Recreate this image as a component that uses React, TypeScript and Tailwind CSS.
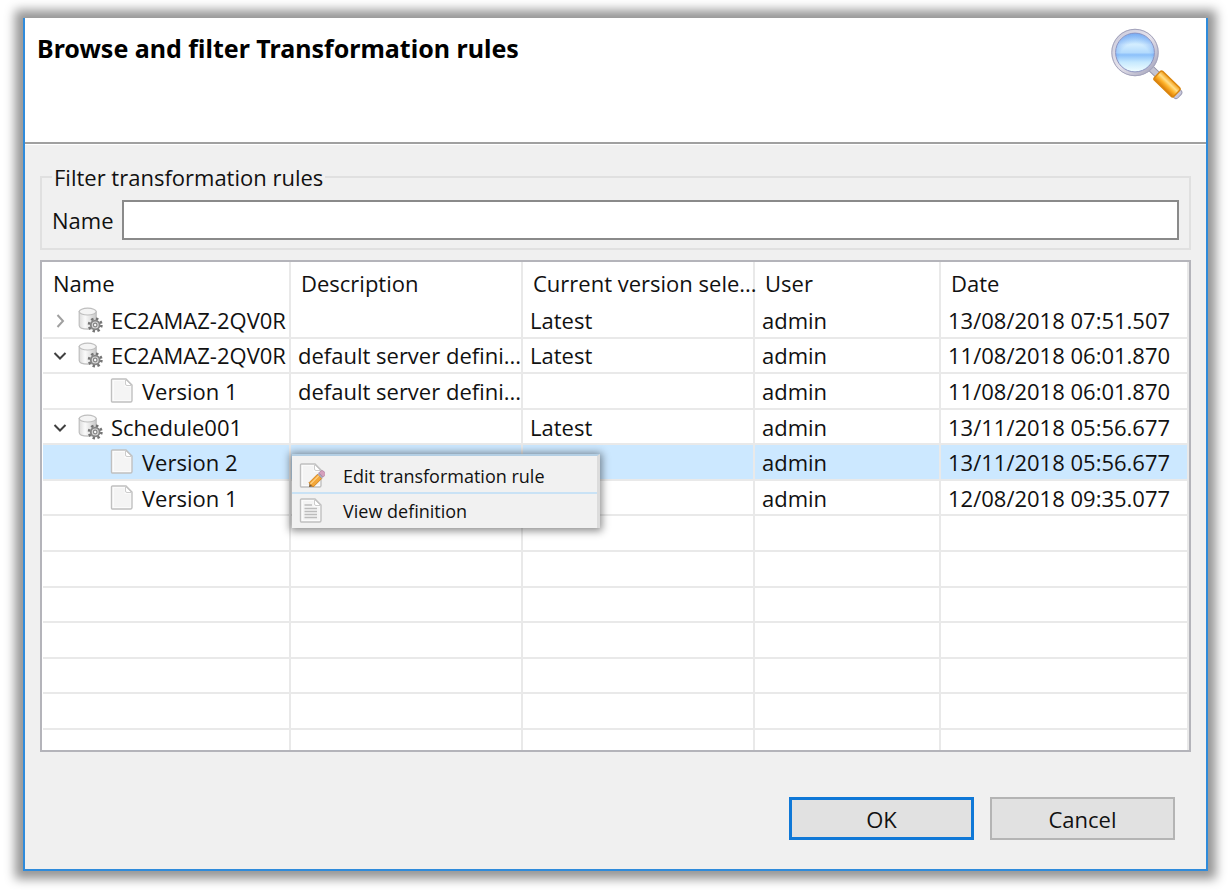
import React from "react";

type Row = {
  kind: "server" | "version";
  name: string;
  open?: boolean;
  description?: string;
  current?: string;
  user: string;
  date: string;
  selected?: boolean;
};

const rows: Row[] = [
  { kind: "server", name: "EC2AMAZ-2QV0R", current: "Latest", user: "admin", date: "13/08/2018 07:51.507" },
  { kind: "server", name: "EC2AMAZ-2QV0R", open: true, description: "default server defini...", current: "Latest", user: "admin", date: "11/08/2018 06:01.870" },
  { kind: "version", name: "Version 1", description: "default server defini...", user: "admin", date: "11/08/2018 06:01.870" },
  { kind: "server", name: "Schedule001", open: true, current: "Latest", user: "admin", date: "13/11/2018 05:56.677" },
  { kind: "version", name: "Version 2", user: "admin", date: "13/11/2018 05:56.677", selected: true },
  { kind: "version", name: "Version 1", user: "admin", date: "12/08/2018 09:35.077" },
];

const emptyRows = [0, 1, 2, 3, 4, 5];

function Magnifier() {
  return (
    <svg viewBox="0 0 74 74" className="size-[74px] shrink-0" aria-hidden="true">
      <defs>
        <linearGradient id="glass" x1="0" y1="0" x2="0" y2="1">
          <stop offset="0" stopColor="#9fd0fa" />
          <stop offset="0.3" stopColor="#d3edff" />
          <stop offset="0.5" stopColor="#b4dbfd" />
          <stop offset="0.56" stopColor="#8cc0fa" />
          <stop offset="0.75" stopColor="#c6e9fe" />
          <stop offset="1" stopColor="#f2feff" />
        </linearGradient>
        <radialGradient id="glassEdge" cx="0.5" cy="0.66" r="0.66">
          <stop offset="0.6" stopColor="#4f8df2" stopOpacity="0" />
          <stop offset="1" stopColor="#4f86ea" stopOpacity="0.5" />
        </radialGradient>
        <linearGradient id="rim" x1="0" y1="0" x2="1" y2="1">
          <stop offset="0" stopColor="#c9c9da" />
          <stop offset="0.5" stopColor="#e6e3ec" />
          <stop offset="1" stopColor="#9f9fb8" />
        </linearGradient>
        <linearGradient id="grip" x1="0" y1="0" x2="0" y2="1">
          <stop offset="0" stopColor="#f29a12" />
          <stop offset="0.35" stopColor="#ffdf8a" />
          <stop offset="0.6" stopColor="#ffb62e" />
          <stop offset="1" stopColor="#d97904" />
        </linearGradient>
      </defs>
      <g transform="translate(25 27) rotate(44)">
        <rect x="22" y="-3" width="10" height="6" fill="#c4c4d2" stroke="#9494a8" />
        <rect x="55" y="-5" width="7" height="10" rx="3" fill="#c8c8dc" stroke="#9c9cb4" />
        <rect x="31" y="-6" width="27" height="12" rx="2" fill="url(#grip)" stroke="#d9860f" strokeWidth="1.4" />
      </g>
      <circle cx="25" cy="26.5" r="21.4" fill="none" stroke="url(#rim)" strokeWidth="4.6" />
      <circle cx="25" cy="26.5" r="23.2" fill="none" stroke="#a4a4bc" strokeWidth="1" />
      <circle cx="25" cy="26.5" r="19.4" fill="url(#glass)" stroke="#8b92c0" strokeWidth="1" />
      <circle cx="25" cy="26.5" r="19" fill="url(#glassEdge)" />
    </svg>
  );
}

function DatabaseGear() {
  return (
    <svg viewBox="0 0 26 26" className="size-[26px] shrink-0" aria-hidden="true">
      <defs>
        <linearGradient id="drum" x1="0" y1="0" x2="1" y2="0">
          <stop offset="0" stopColor="#dcdcdc" />
          <stop offset="0.35" stopColor="#fafafa" />
          <stop offset="1" stopColor="#c9c9c9" />
        </linearGradient>
      </defs>
      <path d="M2.200 4.500v14c0 2.200 4 3.600 9 3.600s8-1.400 8-3.600v-14z" fill="url(#drum)" stroke="#bebebe" strokeWidth="1.2" />
      <ellipse cx="10.7" cy="4.6" rx="8.5" ry="3.4" fill="#f4f4f4" stroke="#bebebe" strokeWidth="1.2" />
      <circle cx="18.2" cy="18" r="6.2" fill="none" stroke="#747474" strokeWidth="2.6" strokeDasharray="2.4 2.47" />
      <circle cx="18.2" cy="18" r="4.4" fill="#d8d8d8" stroke="#858585" strokeWidth="1.8" />
      <circle cx="18.2" cy="18" r="1.8" fill="#fafafa" stroke="#858585" strokeWidth="1.2" />
    </svg>
  );
}

function PageIcon({ lines = false, pencil = false }: { lines?: boolean; pencil?: boolean }) {
  return (
    <svg viewBox="0 0 26 26" className="size-[26px] shrink-0" aria-hidden="true">
      <path d="M2.500 1h13.500l6 6v15.500a1.500 1.500 0 0 1-1.500 1.500h-18a1 1 0 0 1-1-1v-21a1 1 0 0 1 1-1z" fill="#fbfbfb" stroke="#c0c0c0" strokeWidth="1.4" />
      <path d="M4 3h10.500v6h6v13h-16.500z" fill="#f4f4f4" />
      <path d="M15.500 1.500v4.500a1.500 1.500 0 0 0 1.500 1.500h4.500z" fill="#fff" stroke="#cccccc" />
      {lines && <path d="M5.500 7h7.500M5.500 10.500h12.500M5.500 13.500h12.500M5.500 16.500h12.500M5.500 19.500h12.500" stroke="#bcbcbc" strokeWidth="1.3" />}
      {pencil && (
        <g transform="translate(10 24) rotate(-45)">
          <path d="M0 0l4-3v6z" fill="#7a5a34" />
          <path d="M3 -3h12v6h-12z" fill="#f3a73a" stroke="#cf7d17" strokeWidth="0.8" />
          <path d="M3 -1h12" stroke="#ffd48a" strokeWidth="1.2" />
          <path d="M15 -3h2v6h-2z" fill="#a9a9bd" />
          <path d="M17 -3h2.500a2 2 0 0 1 2 2v2a2 2 0 0 1-2 2h-2.500z" fill="#d5a0bd" stroke="#a5799a" strokeWidth="0.6" />
        </g>
      )}
    </svg>
  );
}

function Expander({ open, label }: { open?: boolean; label: string }) {
  return (
    <button type="button" aria-label={`${open ? "Collapse" : "Expand"} ${label}`} aria-expanded={!!open} className="flex size-4 shrink-0 items-center justify-center">
      <svg viewBox="0 0 16 16" className="size-4" fill="none" strokeWidth="2">
        {open ? <path d="M1.500 6l5.500 5.500 5.500-5.500" stroke="#404040" /> : <path d="M4.500 3l5.500 6-5.500 6" stroke="#a0a0a0" />}
      </svg>
    </button>
  );
}

function ContextMenu() {
  return (
    <div role="menu" className="absolute top-[9px] left-full z-10 ml-[3px] w-[308px] border-t-2 border-r-[3px] border-t-[#b4cfe4] border-r-[#dcdcdc] bg-[#f1f1f1] pt-1 text-[18px] leading-6 shadow-[0_1px_8px_2px_rgba(0,0,0,0.45)]">
      <button type="button" role="menuitem" className="flex h-[34px] w-full items-center gap-[18px] border-b-2 border-[#c9e2f5] pl-[7px] text-left">
        <PageIcon pencil />
        <span>Edit transformation rule</span>
      </button>
      <button type="button" role="menuitem" className="flex h-[34px] w-full items-center gap-[18px] pl-[7px] text-left">
        <PageIcon lines />
        <span>View definition</span>
      </button>
    </div>
  );
}

const cell = "border-r-2 border-b-2 border-[#e9e9e9] p-0";
const head = "border-r-2 border-[#e9e9e9] p-0 pt-px pl-[10px] text-left font-normal whitespace-nowrap";
const tail = "border-r-2 border-[#e9e9e9] p-0";

export default function App() {
  return (
    <div className="flex min-h-screen bg-white px-[23px] pt-[18px] pb-[19px] font-['Open_Sans','Noto_Sans',sans-serif] text-[22px] leading-7 text-[#111]">
      <main className="flex min-w-0 flex-1 flex-col border-x-2 border-b-2 border-[#2f8bdb] bg-[#f0f0f0] shadow-[0_0_10px_8px_#969696]">
        <header className="flex h-[126px] items-start justify-between border-b-2 border-[#a0a0a0] bg-white pt-2 pr-[22px] pl-3">
          <h1 className="pt-1 font-['Noto_Sans','Open_Sans',sans-serif] text-[25px] leading-9 font-bold text-black">Browse and filter Transformation rules</h1>
          <Magnifier />
        </header>

        <div className="flex flex-1 flex-col border-t border-white px-[15px] pt-[18px] pb-[29px]">
          <fieldset className="border-2 border-[#e0e0e0] px-[10px] pt-[9px] pb-2">
            <legend className="px-[2px]">Filter transformation rules</legend>
            <div className="flex items-center gap-2">
              <label htmlFor="filter-name">Name</label>
              <input id="filter-name" type="text" className="h-10 min-w-0 flex-1 border-2 border-[#8a8a8a] bg-white px-2 outline-none" />
            </div>
          </fieldset>

          <div className="mt-[10px] flex h-[492px] flex-col border-2 border-[#b4b4ba] bg-white px-px">
            <table className="h-full w-full table-fixed border-separate border-spacing-0">
              <colgroup>
                <col className="w-[248px]" />
                <col className="w-[232px]" />
                <col className="w-[232px]" />
                <col className="w-[186px]" />
                <col className="w-[248px]" />
              </colgroup>
              <thead>
                <tr className="h-[41px]">
                  <th className={head}>Name</th>
                  <th className={head}>Description</th>
                  <th className={head}>Current version sele...</th>
                  <th className={head}>User</th>
                  <th className={head}>Date</th>
                </tr>
              </thead>
              <tbody>
                {rows.map((r, i) => (
                  <tr key={i} className={r.selected ? "bg-[#cce8ff]" : ""}>
                    <td className={`${cell} relative`}>
                      <div className={`flex items-center overflow-hidden whitespace-nowrap ${r.kind === "server" ? "gap-2 pl-[10px]" : "gap-[6px] pl-[67px]"}`}>
                        {r.kind === "server" && <Expander open={r.open} label={r.name} />}
                        {r.kind === "server" ? <DatabaseGear /> : <PageIcon />}
                        <span>{r.name}</span>
                      </div>
                      {r.selected && <ContextMenu />}
                    </td>
                    <td className={`${cell} pl-[7px] whitespace-nowrap`}>{r.description}</td>
                    <td className={`${cell} pl-[7px]`}>{r.current}</td>
                    <td className={`${cell} pl-[7px]`}>{r.user}</td>
                    <td className={`${cell} pl-[7px] whitespace-nowrap`}>{r.date}</td>
                  </tr>
                ))}
                {emptyRows.map((i) => (
                  <tr key={i}>
                    <td className={cell}>&nbsp;</td>
                    <td className={cell} />
                    <td className={cell} />
                    <td className={cell} />
                    <td className={cell} />
                  </tr>
                ))}
                <tr className="h-5">
                  <td className={tail} />
                  <td className={tail} />
                  <td className={tail} />
                  <td className={tail} />
                  <td className={tail} />
                </tr>
              </tbody>
            </table>
          </div>

          <div className="mt-auto flex justify-end gap-4 pr-4">
            <button type="button" className="h-[43px] w-[185px] border-3 border-[#0f78d7] bg-[#e1e1e1]">OK</button>
            <button type="button" className="h-[43px] w-[185px] border-2 border-[#b4b4b4] bg-[#e1e1e1]">Cancel</button>
          </div>
        </div>
      </main>
    </div>
  );
}
